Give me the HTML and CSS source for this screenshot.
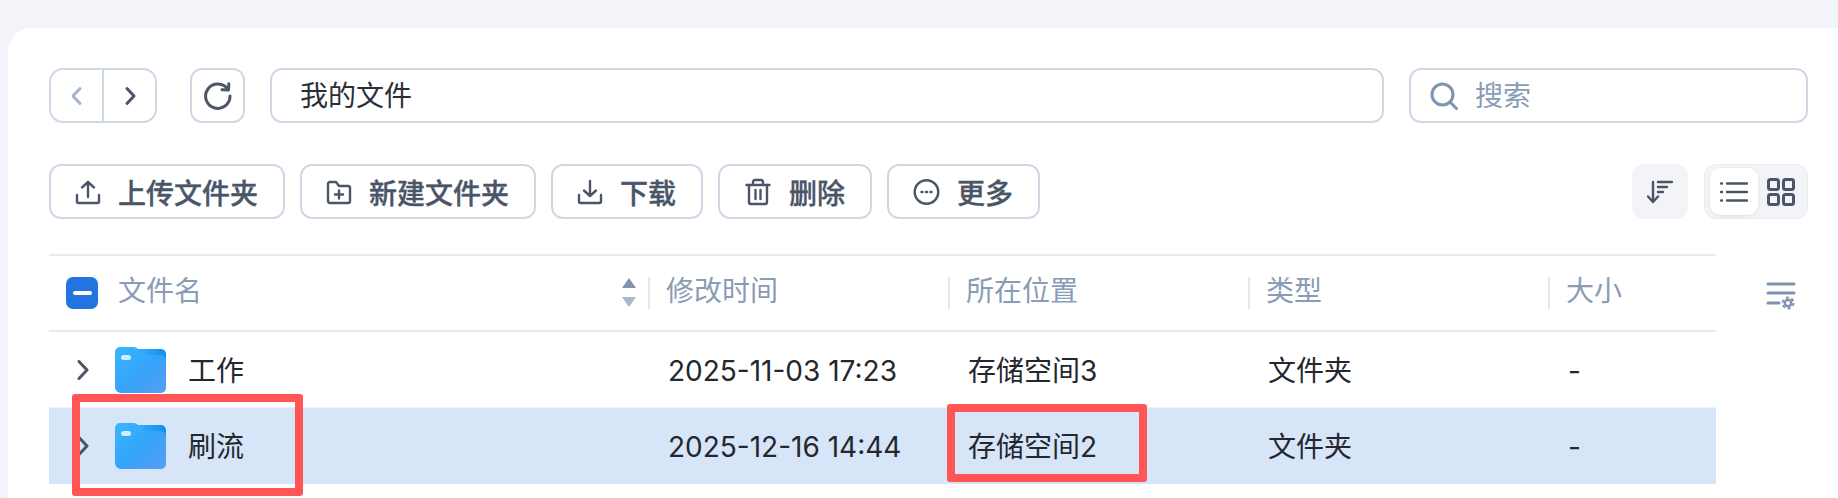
FILE: index.html
```html
<!DOCTYPE html>
<html lang="zh-CN">
<head>
  <meta charset="UTF-8">
  <title>我的文件</title>
  <link rel="stylesheet" href="styles.css">
</head>
<body>
  <!-- File manager panel -->
  <div class="panel">
    <div class="nav-bar">
      <div class="nav-group">
        <button class="nav-btn muted">
          <svg width="24" height="24" viewBox="0 0 24 24" class="line"><path d="M15 4.500 8 12l7 7.500"/></svg>
        </button>
        <button class="nav-btn">
          <svg width="24" height="24" viewBox="0 0 24 24" class="line"><path d="M9 4.500 16 12l-7 7.500"/></svg>
        </button>
      </div>
      <button class="refresh-btn">
        <svg width="30" height="30" viewBox="0 0 30 30" class="line"><path d="M25 8.500A12.200 12.200 0 1 0 27 15"/><path d="M25.800 2.800 25.500 9l-6.500-.3"/></svg>
      </button>
      <div class="path-box">我的文件</div>
      <div class="search-box">
        <svg width="30" height="30" viewBox="0 0 30 30" class="line search-icon"><circle cx="13.500" cy="13.500" r="10.500"/><path d="m21.500 21.500 6 6"/></svg>
        <span>搜索</span>
      </div>
    </div>

    <div class="tool-bar">
      <button class="tool-btn">
        <svg width="26" height="26" viewBox="0 0 26 26" class="line thin"><path d="M13 18V3M7 8.500 13 3l6 5.500"/><path d="M2 16v6.500a1.500 1.500 0 0 0 1.500 1.500h19a1.500 1.500 0 0 0 1.500-1.500V16"/></svg>
        上传文件夹
      </button>
      <button class="tool-btn">
        <svg width="26" height="26" viewBox="0 0 26 26" class="line thin"><path d="M2 5a2 2 0 0 1 2-2h6l3 4h9a2 2 0 0 1 2 2v13a2 2 0 0 1-2 2H4a2 2 0 0 1-2-2z"/><path d="M13 11.500v8M9 15.500h8"/></svg>
        新建文件夹
      </button>
      <button class="tool-btn">
        <svg width="26" height="26" viewBox="0 0 26 26" class="line thin"><path d="M13 2v15M7 11.500l6 5.500 6-5.500"/><path d="M2 16v6.500a1.500 1.500 0 0 0 1.500 1.500h19a1.500 1.500 0 0 0 1.500-1.500V16"/></svg>
        下载
      </button>
      <button class="tool-btn">
        <svg width="28" height="28" viewBox="-1 0 28 28" class="line thin"><path d="M1.500 7h23M8 7V4a2 2 0 0 1 2-2h6a2 2 0 0 1 2 2v3"/><path d="M4 7v17a2 2 0 0 0 2 2h14a2 2 0 0 0 2-2V7"/><path d="M10.500 12v9M15.500 12v9"/></svg>
        删除
      </button>
      <button class="tool-btn">
        <svg width="27" height="26" viewBox="0 0 27 26" class="line thin"><circle cx="13.500" cy="13" r="11.800"/><path d="M8.500 13h1M13 13h1M17.500 13h1"/></svg>
        更多
      </button>
      <div class="tool-right">
        <button class="sort-btn">
          <svg width="26" height="26" viewBox="0 0 26 26" class="line thin"><path d="M6 3v20M1 17.500l5 5.500 5-5.500"/><path d="M11 3h14M11 8h9M11 13h5"/></svg>
        </button>
        <div class="view-toggle">
          <div class="view-item active">
            <svg width="28" height="24" viewBox="0 0 28 24" class="line thin"><path d="M7 3.500h20M7 12h20M7 20.500h20"/><path d="M1 3.500h1M1 12h1M1 20.500h1"/></svg>
          </div>
          <div class="view-item">
            <svg width="28" height="28" viewBox="0 0 28 28" class="line grid-icon"><rect x="1.500" y="1.500" width="10" height="10" rx="2"/><rect x="16.500" y="1.500" width="10" height="10" rx="2"/><rect x="1.500" y="16.500" width="10" height="10" rx="2"/><rect x="16.500" y="16.500" width="10" height="10" rx="2"/></svg>
          </div>
        </div>
      </div>
    </div>

    <div class="table-wrap">
      <div class="file-table">
        <div class="table-head">
          <div class="head-cell name-cell">
            <span class="check"><i></i></span>
            <span class="head-label">文件名</span>
            <span class="sorter"><i class="up"></i><i class="down"></i></span>
          </div>
          <div class="head-cell"><span class="sep"></span><span class="head-label">修改时间</span></div>
          <div class="head-cell"><span class="sep"></span><span class="head-label">所在位置</span></div>
          <div class="head-cell"><span class="sep"></span><span class="head-label">类型</span></div>
          <div class="head-cell"><span class="sep"></span><span class="head-label">大小</span></div>
        </div>

        <div class="table-row">
          <div class="cell name-cell">
            <svg width="14" height="20" viewBox="0 0 14 20" class="line chevron"><path d="M3 1.500 11 10l-8 8.500"/></svg>
            <svg class="folder" width="51" height="46" viewBox="0 0 51 46"><use href="#folder-shape"/></svg>
            <span>工作</span>
          </div>
          <div class="cell">2025-11-03 17:23</div>
          <div class="cell">存储空间3</div>
          <div class="cell">文件夹</div>
          <div class="cell">-</div>
        </div>

        <div class="table-row selected">
          <div class="cell name-cell">
            <svg width="14" height="20" viewBox="0 0 14 20" class="line chevron"><path d="M3 1.500 11 10l-8 8.500"/></svg>
            <svg class="folder" width="51" height="46" viewBox="0 0 51 46"><use href="#folder-shape"/></svg>
            <span>刷流</span>
          </div>
          <div class="cell">2025-12-16 14:44</div>
          <div class="cell">存储空间2</div>
          <div class="cell">文件夹</div>
          <div class="cell">-</div>
        </div>
      </div>

      <button class="column-btn">
        <svg width="30" height="32" viewBox="0 0 30 32" class="col-icon">
          <path d="M2 5h26M2 14h26M2 24h11"/>
          <circle cx="22" cy="24" r="3.200"/>
          <circle class="gear-teeth" cx="22" cy="24" r="5.500"/>
        </svg>
      </button>
    </div>
  </div>

  <!-- Red annotation boxes drawn on top of the screenshot -->
  <div class="mark mark-name"></div>
  <div class="mark mark-place"></div>

  <!-- Shared folder icon -->
  <svg width="0" height="0" class="defs">
    <defs>
      <linearGradient id="folder-back" x1="0" y1="0" x2="1" y2="0">
        <stop offset="0" stop-color="#3fb4fb"/>
        <stop offset="1" stop-color="#0f8ef2"/>
      </linearGradient>
      <linearGradient id="folder-front" x1="0" y1="0" x2="1" y2="1">
        <stop offset="0" stop-color="#36b8fd"/>
        <stop offset=".55" stop-color="#35a2f9"/>
        <stop offset="1" stop-color="#5a9ef0"/>
      </linearGradient>
      <symbol id="folder-shape" viewBox="0 0 51 46">
        <path d="M18 2h28a5 5 0 0 1 5 5v12H18z" fill="url(#folder-back)"/>
        <path d="M5 0h13c3 0 4.500 1 6.500 3.500C27 6.500 28.500 8 32 8h14a5 5 0 0 1 5 5v28a5 5 0 0 1-5 5H6a6 6 0 0 1-6-6V5a5 5 0 0 1 5-5z" fill="url(#folder-front)"/>
        <rect x="6" y="8" width="10" height="5" rx="2.500" fill="#cfeeff"/>
      </symbol>
    </defs>
  </svg>
</body>
</html>
```

FILE: styles.css
```css
/* Page */
body {
  margin: 0;
  height: 498px;
  overflow: hidden;
  background-color: #f2f4f9;
  font-family: Inter, "Noto Sans CJK SC", sans-serif;
  font-size: 28px;
  line-height: 34px;
  color: #24272d;
}

button {
  font-family: inherit;
  font-size: 28px;
  background: none;
  padding: 0;
  cursor: pointer;
}

.defs {
  display: block;
}

/* Main white panel */
.panel {
  margin: 28px 0 0 8px;
  padding: 40px 30px 0 41px;
  height: 430px;
  background-color: #fff;
  border-top-left-radius: 24px;
}

.line {
  fill: none;
  stroke: #4a5568;
  stroke-width: 3;
  stroke-linecap: round;
  stroke-linejoin: round;
}

.line.thin {
  stroke-width: 2.400;
}

.line.grid-icon {
  stroke-width: 3;
}

/* Top navigation row */
.nav-bar {
  display: flex;
  height: 55px;
}

.nav-group {
  display: flex;
  width: 108px;
  margin-right: 33px;
  border: 2px solid #cfd8e5;
  border-radius: 14px;
  box-sizing: border-box;
}

.nav-btn {
  flex: 1;
  border: none;
  display: flex;
  align-items: center;
  justify-content: center;
}

.nav-btn + .nav-btn {
  border-left: 2px solid #cfd8e5;
}

.nav-btn.muted .line {
  stroke: #a4b4c9;
}

.refresh-btn {
  width: 55px;
  margin-right: 25px;
  border: 2px solid #cfd8e5;
  border-radius: 12px;
  box-sizing: border-box;
  display: flex;
  align-items: center;
  justify-content: center;
}

.path-box {
  flex: 1;
  margin-right: 25px;
  padding-left: 28px;
  border: 2px solid #cfd8e5;
  border-radius: 12px;
  display: flex;
  align-items: center;
  color: #2b2f36;
}

.search-box {
  width: 399px;
  box-sizing: border-box;
  padding-left: 18px;
  border: 2px solid #cfd8e5;
  border-radius: 12px;
  display: flex;
  align-items: center;
  gap: 16px;
  color: #8a9cb5;
}

.search-icon {
  stroke: #7f94b0;
}

/* Action buttons */
.tool-bar {
  display: flex;
  align-items: center;
  gap: 15px;
  height: 55px;
  margin-top: 41px;
}

.tool-btn {
  height: 55px;
  padding: 0 25px 0 24px;
  border: 2px solid #cfd8e5;
  border-radius: 12px;
  display: flex;
  align-items: center;
  gap: 17px;
  font-weight: 500;
  -webkit-text-stroke: 0.35px #4a5568;
  color: #4a5568;
}

.tool-right {
  margin-left: auto;
  display: flex;
  gap: 16px;
}

.sort-btn {
  width: 56px;
  height: 55px;
  border: none;
  border-radius: 12px;
  background-color: #f2f4f7;
  display: flex;
  align-items: center;
  justify-content: center;
}

.view-toggle {
  width: 104px;
  height: 55px;
  box-sizing: border-box;
  padding: 3px 4px 3px 5px;
  border: 1px solid #e8ebf0;
  border-radius: 12px;
  background-color: #f2f4f7;
  display: flex;
}

.view-item {
  flex: 1;
  display: flex;
  align-items: center;
  justify-content: center;
}

.view-item.active {
  flex: 0 0 48px;
  background-color: #fff;
  border-radius: 10px;
  box-shadow: 0 1px 3px rgba(60, 70, 90, 0.12);
}

/* File table */
.table-wrap {
  display: flex;
  margin-top: 35px;
}

.file-table {
  width: 1667px;
}

.table-head,
.table-row {
  display: grid;
  grid-template-columns: 600px 300px 300px 300px 167px;
}

.table-head {
  height: 78px;
  box-sizing: border-box;
  border-top: 2px solid #e6eaf3;
  border-bottom: 2px solid #e6eaf3;
  color: #8a9cb5;
}

.head-cell {
  display: flex;
  align-items: center;
  padding-bottom: 1px;
}

.head-label {
  margin-bottom: 4px;
}

.sep {
  width: 2px;
  height: 32px;
  margin: 0 16px 0 -1px;
  background-color: #e2e7ef;
}

.name-cell {
  padding-left: 17px;
}

.check {
  width: 32px;
  height: 32px;
  margin-right: 20px;
  border-radius: 7px;
  background-color: #2373e0;
  display: flex;
  align-items: center;
  justify-content: center;
}

.check i {
  width: 19px;
  height: 4px;
  border-radius: 2px;
  background-color: #fff;
}

.sorter {
  margin-left: auto;
  margin-right: 13px;
  display: flex;
  flex-direction: column;
  gap: 9px;
}

.sorter i {
  width: 0;
  height: 0;
  border-left: 7px solid transparent;
  border-right: 7px solid transparent;
}

.sorter .up {
  border-bottom: 10px solid #8093ad;
}

.sorter .down {
  border-top: 10px solid #a9b8cc;
}

.table-row {
  height: 76px;
  border-bottom: 1px solid #f1f3f8;
  box-sizing: border-box;
}

.table-row.selected {
  background-color: #d6e5f8;
  border-bottom: none;
}

.cell {
  padding-left: 19px;
  padding-top: 2px;
  display: flex;
  align-items: center;
}

.cell.name-cell {
  padding-left: 27px;
}

.cell svg {
  margin-top: -2px;
}

.chevron {
  margin-right: 25px;
}

.folder {
  margin-right: 22px;
}

.column-btn {
  margin: 25px 0 0 50px;
  border: none;
  align-self: flex-start;
}

.col-icon {
  display: block;
  fill: none;
  stroke: #8093ad;
  stroke-width: 3;
  stroke-linecap: round;
}

.col-icon circle {
  stroke-width: 2.500;
}

.col-icon .gear-teeth {
  stroke-width: 2;
  stroke-linecap: butt;
  stroke-dasharray: 3 2.760;
}

/* Red annotation rectangles */
.mark {
  position: absolute;
  box-sizing: border-box;
  border: 8px solid #ff5555;
  border-radius: 3px;
}

.mark-name {
  left: 72px;
  top: 394px;
  width: 231px;
  height: 102px;
}

.mark-place {
  left: 947px;
  top: 404px;
  width: 200px;
  height: 78px;
}
```
